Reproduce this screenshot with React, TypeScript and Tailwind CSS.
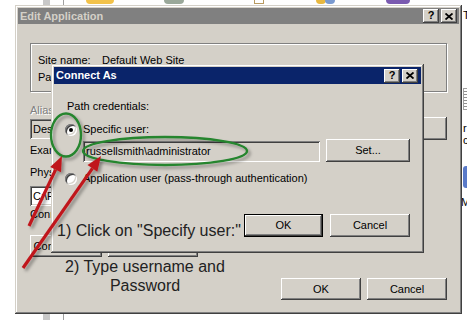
import React from 'react';

const raised =
    'bg-[#d4d0c8] shadow-[inset_-1px_-1px_#404040,inset_1px_1px_#ffffff,inset_-2px_-2px_#808080,inset_2px_2px_#d4d0c8]';
const frame =
    'bg-[#d4d0c8] shadow-[inset_-1px_-1px_#404040,inset_1px_1px_#d4d0c8,inset_-2px_-2px_#808080,inset_2px_2px_#ffffff]';
const sunken =
    'shadow-[inset_1px_1px_#808080,inset_-1px_-1px_#ffffff,inset_2px_2px_#404040,inset_-2px_-2px_#d4d0c8]';

function TitleButtons() {
    return (
        <div className="flex gap-[2px]">
            <div className={`w-[16px] h-[14px] ${raised} flex items-center justify-center text-[11px] font-bold leading-none text-black pb-[1px]`}>
                ?
            </div>
            <div className={`w-[16px] h-[14px] ${raised} flex items-center justify-center`}>
                <svg width="8" height="7" viewBox="0 0 8 7">
                    <path d="M0.5 0.5 L7.5 6.5 M7.5 0.5 L0.5 6.5" stroke="#000" strokeWidth="1.8" />
                </svg>
            </div>
        </div>
    );
}

function Button({ label, w, h, isDefault }: { label: string; w: string; h: string; isDefault?: boolean }) {
    if (isDefault) {
        return (
            <div className={`${w} ${h} border border-black flex`}>
                <div className={`flex-1 ${raised} flex items-center justify-center`}>{label}</div>
            </div>
        );
    }
    return <div className={`${w} ${h} ${raised} flex items-center justify-center`}>{label}</div>;
}

function Radio({ checked }: { checked?: boolean }) {
    return (
        <div className={`w-[12px] h-[12px] rounded-full bg-white ${sunken} flex items-center justify-center`}>
            {checked && <div className="w-[4px] h-[4px] rounded-full bg-black" />}
        </div>
    );
}

function arrowHead(x1: number, y1: number, tx: number, ty: number, len: number, half: number) {
    const dx = tx - x1;
    const dy = ty - y1;
    const d = Math.hypot(dx, dy);
    const ux = dx / d;
    const uy = dy / d;
    const bx = tx - len * ux;
    const by = ty - len * uy;
    const pts = `${tx},${ty} ${bx - half * uy},${by + half * ux} ${bx + half * uy},${by - half * ux}`;
    return { bx, by, pts };
}

function Annotations() {
    const a1 = arrowHead(29, 226, 62, 156, 15, 6);
    const a2 = arrowHead(23, 268, 101, 156, 15, 6);
    return (
        <svg className="absolute left-0 top-0 pointer-events-none" width="467" height="320" viewBox="0 0 467 320">
            <defs>
                <filter id="sh" x="-20%" y="-20%" width="140%" height="140%">
                    <feDropShadow dx="2.5" dy="2.5" stdDeviation="1.5" floodColor="#000" floodOpacity="0.35" />
                </filter>
            </defs>
            <g filter="url(#sh)" fill="none" stroke="#25852f" strokeWidth="2.4">
                <ellipse cx="66" cy="135" rx="15" ry="21.5" />
                <ellipse cx="165" cy="151" rx="82" ry="14" />
            </g>
            <g filter="url(#sh)">
                <line x1="29" y1="226" x2={a1.bx} y2={a1.by} stroke="#c0181c" strokeWidth="3.2" />
                <polygon points={a1.pts} fill="#c0181c" />
                <line x1="23" y1="268" x2={a2.bx} y2={a2.by} stroke="#c0181c" strokeWidth="3.2" />
                <polygon points={a2.pts} fill="#c0181c" />
            </g>
        </svg>
    );
}

export default function App() {
    return (
        <div className="relative w-[467px] h-[320px] overflow-hidden bg-white font-['Liberation_Sans',Arial,sans-serif] text-[11px] text-black">
            {/* desktop bits peeking out */}
            <div className="absolute left-[43px] top-0 w-[7px] h-[5px] bg-[#c8c8c8]" />
            <div className="absolute left-[63px] top-0 w-[1px] h-[5px] bg-[#a0a0a0]" />
            <div className="absolute left-[43px] top-[314px] w-[7px] h-[6px] bg-[#c8c8c8]" />
            <div className="absolute left-[63px] top-[314px] w-[1px] h-[6px] bg-[#a0a0a0]" />
            <div className="absolute left-[86px] top-[-4px] w-[28px] h-[8px] rounded-full bg-[#f2c24a]" />
            <div className="absolute left-[164px] top-[-4px] w-[20px] h-[8px] rounded-full bg-[#9aa89a]" />
            <div className="absolute left-[254px] top-[-3px] w-[10px] h-[7px] border border-[#b89a60] bg-white" />
            <div className="absolute left-[316px] top-[-4px] w-[10px] h-[8px] rounded-full bg-[#e8b840]" />
            <div className="absolute left-[325px] top-[-4px] w-[10px] h-[8px] rounded-full bg-[#7a9ad0]" />
            <div className="absolute left-[386px] top-[-4px] w-[24px] h-[8px] rounded-full bg-[#7a5ab0]" />
            <div className="absolute left-[463px] top-[9px] leading-[13px]">T</div>
            <div className="absolute left-[463px] top-[88px] w-[6px] h-[22px] border border-[#a0a0a0] bg-[repeating-linear-gradient(#fff_0_2px,#909090_2px_3px)]" />
            <div className="absolute left-[463px] top-[122px] leading-[12px]">r<br />c</div>
            <div className="absolute left-[463px] top-[166px] w-[6px] h-[22px] rounded-[3px] bg-[#5a7ac8]" />
            <div className="absolute left-[461px] top-[196px] leading-[13px]">M</div>

            {/* Edit Application window */}
            <div className={`absolute left-[15px] top-[5px] w-[447px] h-[309px] ${frame} p-[3px] flex flex-col`}>
                <div className="h-[16px] bg-[#808080] flex items-center justify-between pl-[2px] pr-[2px]">
                    <span className="font-bold text-[#d4d0c8] leading-none">Edit Application</span>
                    <TitleButtons />
                </div>
                <div className="flex flex-col px-[12px]">
                    <div className="mt-[19px] h-[49px] border border-[#808080] shadow-[1px_1px_#ffffff,inset_1px_1px_#ffffff] pl-[7px] pt-[10px]">
                        <div className="flex h-[13px] leading-[13px]">
                            <span className="w-[64px]">Site name:</span>
                            <span>Default Web Site</span>
                        </div>
                        <div className="flex h-[13px] leading-[13px] mt-[4px]">
                            <span className="w-[64px]">Path:</span>
                            <span>/</span>
                        </div>
                    </div>
                    <div className="mt-[12px] h-[13px] leading-[13px] text-[#808080] [text-shadow:1px_1px_#ffffff]">Alias:</div>
                    <div className="flex items-center h-[23px]">
                        <div className={`w-[140px] h-[20px] ${sunken} bg-[#d4d0c8] pl-[3px] leading-[20px]`}>Description</div>
                        <div className={`ml-auto w-[96px] h-[23px] ${raised} flex items-center justify-center`}>Select...</div>
                    </div>
                    <div className="mt-[4px] h-[13px] leading-[13px]">Example: sales</div>
                    <div className="mt-[9px] h-[13px] leading-[13px]">Physical path:</div>
                    <div className="mt-[6px] flex items-center">
                        <div className={`w-[340px] h-[20px] bg-white ${sunken} pl-[3px] leading-[20px]`}>C:\Projects\Web</div>
                        <div className={`ml-[4px] w-[26px] h-[22px] ${raised} flex items-center justify-center`}>...</div>
                    </div>
                    <div className="mt-[1px] h-[13px] leading-[13px]">Connect as: pass-through</div>
                    <div className="mt-[14px] flex gap-[6px]">
                        <Button label="Connect as..." w="w-[72px]" h="h-[22px]" />
                        <Button label="Test Settings..." w="w-[90px]" h="h-[22px]" />
                    </div>
                    <div className="mt-[21px] flex justify-end gap-[6px]">
                        <Button label="OK" w="w-[80px]" h="h-[22px]" />
                        <Button label="Cancel" w="w-[80px]" h="h-[22px]" />
                    </div>
                </div>
            </div>

            {/* Connect As dialog */}
            <div className={`absolute left-[51px] top-[64px] w-[373px] h-[189px] ${frame} p-[3px] flex flex-col`}>
                <div className="h-[17px] bg-[#0a246a] flex items-center justify-between pl-[2px] pr-[3px]">
                    <span className="font-bold text-white leading-none">Connect As</span>
                    <TitleButtons />
                </div>
                <div className="flex flex-col pl-[11px] pr-[11px]">
                    <div className="mt-[16px] ml-[2px] h-[13px] leading-[13px]">Path credentials:</div>
                    <div className="mt-[10px] flex items-center gap-[6px] h-[13px] leading-[13px]">
                        <Radio checked />
                        <span>Specific user:</span>
                    </div>
                    <div className="mt-[3px] flex items-end h-[23px] pl-[18px]">
                        <div className={`flex-1 h-[21px] bg-[#d4d0c8] ${sunken} pl-[3px] leading-[21px]`}>russellsmith\administrator</div>
                        <div className={`ml-[6px] w-[84px] h-[23px] ${raised} flex items-center justify-center`}>Set...</div>
                    </div>
                    <div className="mt-[10px] flex items-center gap-[6px] h-[13px] leading-[13px]">
                        <Radio />
                        <span>Application user (pass-through authentication)</span>
                    </div>
                    <div className="mt-[29px] flex justify-end gap-[7px]">
                        <Button label="OK" w="w-[79px]" h="h-[23px]" isDefault />
                        <Button label="Cancel" w="w-[80px]" h="h-[23px]" />
                    </div>
                </div>
            </div>

            {/* Callout text */}
            <div className="absolute left-[57px] top-[222px] text-[16px] leading-[18px] text-[#222222]">
                1) Click on "Specify user:"
            </div>
            <div className="absolute left-[45px] top-[257px] w-[200px] text-center text-[16px] leading-[19px] text-[#222222]">
                2) Type username and
                <br />
                Password
            </div>

            <Annotations />
        </div>
    );
}
